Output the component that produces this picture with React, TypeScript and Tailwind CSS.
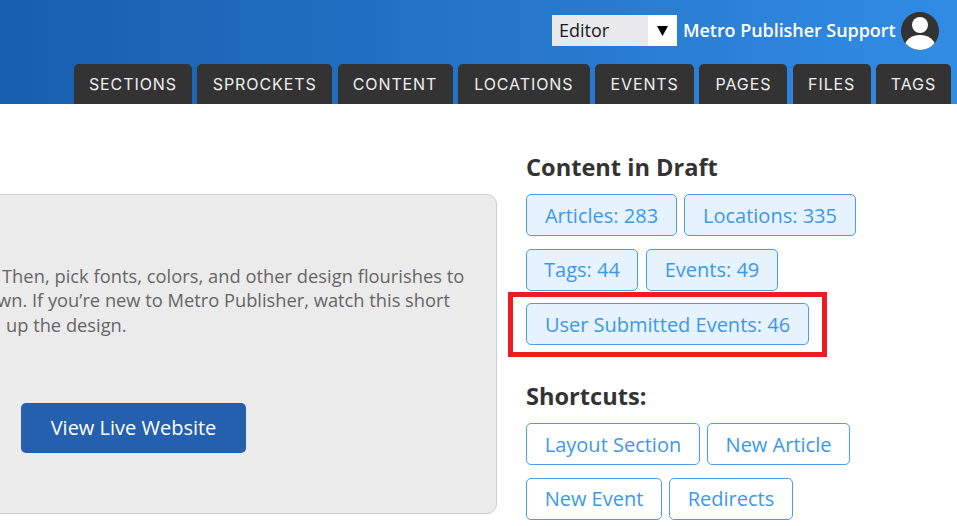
const tabs = [
  { label: "SECTIONS", width: "w-[118px]" },
  { label: "SPROCKETS", width: "w-[135px]" },
  { label: "CONTENT", width: "w-[115px]" },
  { label: "LOCATIONS", width: "w-[132px]" },
  { label: "EVENTS", width: "w-[99px]" },
  { label: "PAGES", width: "w-[88px]" },
  { label: "FILES", width: "w-[78px]" },
  { label: "TAGS", width: "w-[75px]" },
];
const drafts = [
  {
    gap: "gap-[7px]",
    line: "leading-[41px]",
    items: [
      { label: "Articles: 283", width: "w-[151px]" },
      { label: "Locations: 335", width: "w-[172px]" },
    ],
  },
  {
    gap: "gap-[8px]",
    line: "leading-[40px]",
    items: [
      { label: "Tags: 44", width: "w-[112px]" },
      { label: "Events: 49", width: "w-[132px]" },
    ],
  },
  {
    gap: "gap-[7px]",
    line: "leading-[41px]",
    items: [{ label: "User Submitted Events: 46", width: "w-[283px]" }],
  },
];
const shortcuts = [
  {
    gap: "gap-[7px]",
    line: "leading-[41px]",
    items: [
      { label: "Layout Section", width: "w-[174px]" },
      { label: "New Article", width: "w-[143px]" },
    ],
  },
  {
    gap: "gap-[7px]",
    line: "leading-[40px]",
    items: [
      { label: "New Event", width: "w-[136px]" },
      { label: "Redirects", width: "w-[124px]" },
    ],
  },
];

const Header = () => (
  <header className="h-[104px] flex flex-col items-end bg-gradient-to-r from-[#175eae] to-[#328ce4] pr-[6px]">
    <div className="flex items-center h-[64px] pr-[12px] pb-[3px]">
      <div className="flex w-[125px] h-[31px] bg-white text-[18px] text-[#1a1a1a]">
        <span className="flex-1 bg-[#e9e8ed] pl-[7px] leading-[31px]">Editor</span>
        <span className="w-[29px] flex items-center justify-center">
          <svg viewBox="0 0 11 10" className="w-[11px] h-[10px]" aria-hidden="true">
            <path d="M0 0H11L5.5 10Z" fill="#000" />
          </svg>
        </span>
      </div>
      <span className="ml-[6px] w-[212px] whitespace-nowrap text-[18px] font-semibold tracking-[-0.06px] text-white">
        Metro Publisher Support
      </span>
      <svg viewBox="0 0 38 38" className="ml-[6px] w-[38px] h-[38px]" aria-hidden="true">
        <clipPath id="avatar-clip">
          <circle cx="19" cy="19" r="19" />
        </clipPath>
        <circle cx="19" cy="19" r="19" fill="#333" />
        <circle cx="19" cy="13" r="8" fill="#fff" />
        <ellipse cx="19" cy="34" rx="15" ry="11" fill="#fff" clipPath="url(#avatar-clip)" />
      </svg>
    </div>
    <nav className="flex gap-[5.3px] h-[40px]">
      {tabs.map((tab) => (
        <a
          key={tab.label}
          className={`${tab.width} rounded-t-[5px] bg-[#333] text-center text-[#eee] text-[16px] leading-[41px] tracking-[0.9px] font-['Inter',sans-serif]`}
        >
          {tab.label}
        </a>
      ))}
    </nav>
  </header>
);

type Row = { gap: string; line: string; items: { label: string; width: string }[] };

const ButtonRows = ({ rows, filled }: { rows: Row[]; filled?: boolean }) => (
  <div className="mt-[9px] flex flex-col gap-[12.5px]">
    {rows.map((row, i) => (
      <div key={i} className={`flex ${row.gap}`}>
        {row.items.map((item) => (
          <a
            key={item.label}
            className={`${item.width} ${row.line} h-[42px] rounded-[5px] border border-[#4b9dea] text-center text-[#3c98ee] text-[20px] ${
              filled ? "bg-[#e6f2fd]" : "bg-white"
            }`}
          >
            {item.label}
          </a>
        ))}
      </div>
    ))}
  </div>
);

export default function App() {
  return (
    <div className="relative h-[526px] overflow-hidden bg-white font-['Open_Sans',sans-serif]">
      <Header />
      <main className="flex">
        <section className="w-[517px] shrink-0 h-[320px] mt-[90px] -ml-[20px] pl-[20px] rounded-[10px] border border-[#cfcfcf] bg-[#ebebeb] text-[18.3px] leading-[24.4px] text-[#666]">
          <p className="mt-[69px] whitespace-nowrap">
            <span className="block ml-[1px] tracking-[0.03px]">Then, pick fonts, colors, and other design flourishes to</span>
            <span className="block -ml-[15px]">own. If you’re new to Metro Publisher, watch this short</span>
            <span className="block ml-[5px]">up the design.</span>
          </p>
          <a className="block w-[225px] h-[50px] mt-[66px] ml-[20px] rounded-[5px] bg-[#2460ad] text-center text-[20px] leading-[50px] text-white">
            View Live Website
          </a>
        </section>
        <aside className="ml-[29px] pt-[45px]">
          <h2 className="text-[23.6px] leading-[36px] font-bold text-[#333]">Content in Draft</h2>
          <ButtonRows rows={drafts} filled />
          <h2 className="mt-[33px] text-[23.6px] leading-[36px] font-bold text-[#333]">Shortcuts:</h2>
          <ButtonRows rows={shortcuts} />
        </aside>
      </main>
      {/* red annotation box drawn over the screenshot */}
      <div className="absolute left-[508px] top-[292px] w-[319px] h-[65px] border-[5px] border-[#ed1c24]" />
    </div>
  );
}
